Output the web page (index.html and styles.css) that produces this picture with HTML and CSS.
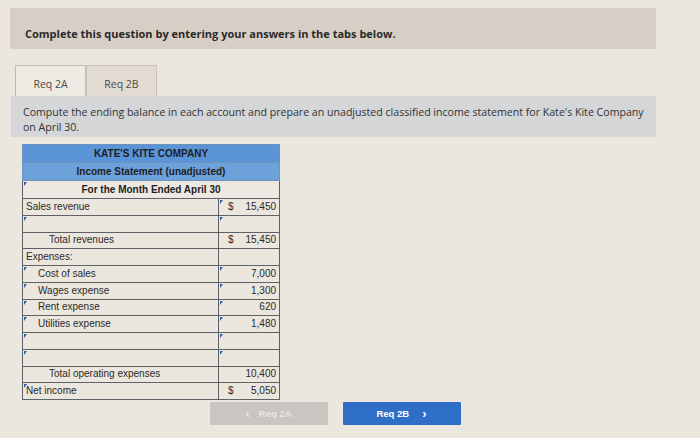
FILE: index.html
```html
<!DOCTYPE html>
<html>
<head>
<meta charset="utf-8">
<link rel="stylesheet" href="styles.css">
</head>
<body>
<div class="page">
  <div class="banner">Complete this question by entering your answers in the tabs below.</div>
  <div class="tabs">
    <div class="tab active">Req 2A</div>
    <div class="tab">Req 2B</div>
  </div>
  <div class="instr">Compute the ending balance in each account and prepare an unadjusted classified income statement for Kate's Kite Company on April 30.</div>
  <table class="stmt">
    <colgroup><col class="c-lbl"><col class="c-amt"></colgroup>
    <tr class="h1"><td colspan="2">KATE'S KITE COMPANY</td></tr>
    <tr class="h2"><td colspan="2">Income Statement (unadjusted)</td></tr>
    <tr class="h3"><td colspan="2" class="mk">For the Month Ended April 30</td></tr>
    <tr><td class="lbl">Sales revenue</td><td class="amt mk"><div class="val"><span>$</span><span>15,450</span></div></td></tr>
    <tr><td class="lbl mk"></td><td class="amt mk"></td></tr>
    <tr><td class="lbl tot">Total revenues</td><td class="amt"><div class="val"><span>$</span><span>15,450</span></div></td></tr>
    <tr><td class="lbl">Expenses:</td><td class="amt"></td></tr>
    <tr><td class="lbl sub mk">Cost of sales</td><td class="amt mk"><div class="val"><span></span><span>7,000</span></div></td></tr>
    <tr><td class="lbl sub mk">Wages expense</td><td class="amt mk"><div class="val"><span></span><span>1,300</span></div></td></tr>
    <tr><td class="lbl sub mk">Rent expense</td><td class="amt mk"><div class="val"><span></span><span>620</span></div></td></tr>
    <tr><td class="lbl sub mk">Utilities expense</td><td class="amt mk"><div class="val"><span></span><span>1,480</span></div></td></tr>
    <tr><td class="lbl mk"></td><td class="amt mk"></td></tr>
    <tr><td class="lbl mk"></td><td class="amt mk"></td></tr>
    <tr><td class="lbl tot">Total operating expenses</td><td class="amt"><div class="val"><span></span><span>10,400</span></div></td></tr>
    <tr><td class="lbl mk">Net income</td><td class="amt"><div class="val"><span>$</span><span>5,050</span></div></td></tr>
  </table>
  <div class="nav">
    <button class="btn prev"><span class="chev">&lsaquo;</span>Req 2A</button>
    <button class="btn next">Req 2B<span class="chev">&rsaquo;</span></button>
  </div>
</div>
</body>
</html>
```
FILE: styles.css
```css
html, body {
  margin: 0;
  padding: 0;
}
body {
  width: 700px;
  height: 438px;
  overflow: hidden;
  background: #ebe6de;
  font-family: "Open Sans", "DejaVu Sans", sans-serif;
  color: #333;
}
.page {
  padding: 8px 44px 0 10px;
}
.banner {
  height: 41px;
  box-sizing: border-box;
  background: #d7cfc6;
  padding: 19px 0 0 15px;
  font-size: 11px;
  line-height: 14px;
  font-weight: 700;
  color: #2a2a2a;
}
.tabs {
  display: flex;
  margin: 16px 0 0 5px;
}
.tab {
  width: 71px;
  height: 31px;
  box-sizing: border-box;
  padding-top: 5px;
  display: flex;
  align-items: center;
  justify-content: center;
  font-size: 10.5px;
  color: #4a4a4a;
  background: #e2dbd2;
  border: 1px solid #cbc4bb;
  border-bottom: none;
}
.tab.active {
  background: #eeeae4;
  border-color: #c2bbb2;
}
.instr {
  margin-left: 1px;
  background: #d4d6d8;
  padding: 9px 12px 3px 12px;
  font-size: 10.6px;
  line-height: 14.5px;
  color: #333;
}
.stmt {
  margin: 7px 0 0 12px;
  border-collapse: collapse;
  table-layout: fixed;
  width: 257px;
  font-family: "Liberation Sans", Arial, sans-serif;
  font-size: 10px;
  color: #2a2a2a;
}
.c-lbl { width: 196px; }
.c-amt { width: 61px; }
.stmt tr {
  height: 16.75px;
}
.stmt .h1, .stmt .h2, .stmt .h3 {
  height: 18px;
}
.stmt td {
  position: relative;
  height: auto;
  padding: 0;
  border: 1.5px solid #5e6165;
  background: #ebe6de;
  line-height: 12px;
  white-space: nowrap;
}
.stmt .h1 td, .stmt .h2 td, .stmt .h3 td {
  text-align: center;
  font-weight: 700;
  color: #1e1e1e;
}
.stmt .h1 td {
  background: #5a94d6;
  border-color: #6f93bf;
}
.stmt .h2 td {
  background: #6da1da;
  border-color: #6f93bf;
}
.stmt .h3 td {
  background: #ede8e1;
}
.lbl { padding-left: 3px !important; }
.lbl.sub { padding-left: 15px !important; }
.lbl.tot { padding-left: 26px !important; }
.val {
  display: flex;
  justify-content: space-between;
  padding: 0 3px 0 9px;
}
.mk::before {
  content: "";
  position: absolute;
  left: 1px;
  top: 1px;
  border-top: 4px solid #2f5fa6;
  border-right: 3px solid transparent;
}
.nav {
  display: flex;
  justify-content: center;
  gap: 15px;
  margin-top: 2px;
  padding-left: 4px;
}
.btn {
  width: 118px;
  height: 23px;
  border: none;
  border-radius: 1px;
  font-family: "Liberation Sans", Arial, sans-serif;
  font-size: 9.5px;
  font-weight: 700;
  display: flex;
  align-items: center;
  justify-content: center;
  padding: 0;
}
.btn.prev {
  background: #c9c6c2;
  color: #e9e7e4;
}
.btn.next {
  background: #2f6ec6;
  color: #fff;
}
.chev {
  font-size: 13px;
  font-weight: 700;
  line-height: 1;
}
.prev .chev { margin-right: 9px; }
.next .chev { margin-left: 13px; }
```
